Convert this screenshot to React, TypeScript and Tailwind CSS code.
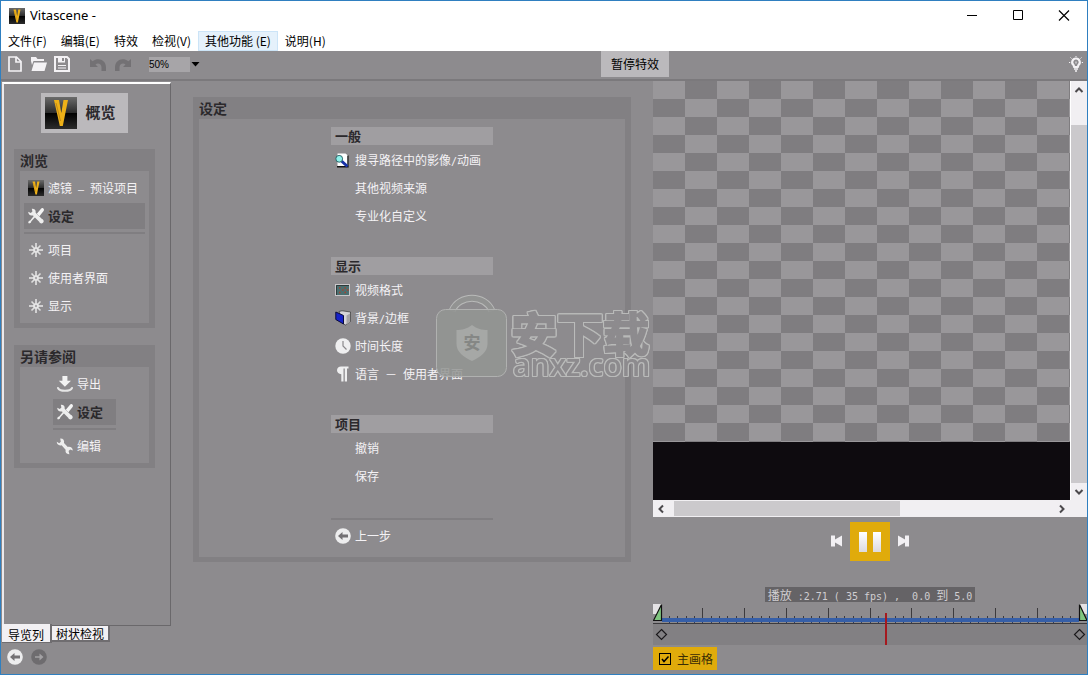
import React from "react";

type IconProps = { className?: string };

function VLogo({ className }: IconProps) {
  return (
    <svg viewBox="0 0 32 32" className={className} aria-hidden="true">
      <defs>
        <linearGradient id="vTop" x1="0" y1="0" x2="0" y2="1">
          <stop offset="0" stopColor="#6b6b6b" />
          <stop offset="1" stopColor="#2a2a2a" />
        </linearGradient>
        <linearGradient id="vBottom" x1="0" y1="0" x2="0" y2="1">
          <stop offset="0" stopColor="#000" />
          <stop offset="1" stopColor="#2c2c2c" />
        </linearGradient>
      </defs>
      <rect width="32" height="16" fill="url(#vTop)" />
      <rect y="16" width="32" height="16" fill="url(#vBottom)" />
      <path d="M9 3h5l2.300 13 2.200-13H23l-5.200 26h-3z" fill="#eeb118" />
      <path d="M11 6l4.500 18" stroke="#c28a14" strokeWidth="1" />
    </svg>
  );
}

function ToolsIcon({ className }: IconProps) {
  return (
    <svg viewBox="1 1 16 16" className={className} aria-hidden="true">
      <path
        d="M1.2 4.8 3.8 6 5.4 4.600 4.800 1.800C7.200 1.400 9.200 3.200 8.600 5.800l6.400 6.200c1.800.6 2.200 2.600 1 3.800-1.200 1.200-3.200.8-3.800-1L6 8.400C3.400 9.200 1.200 7.400 1.200 4.800z"
        fill="#ededed"
      />
      <path d="M16.400 1.400c.8.8.8 1.800 0 2.800l-4 5-2.600-2.400 4.200-5c.8-1 1.800-1 2.400-.4z" fill="#f4f4f4" />
      <path d="M8.800 9.600 4.400 14.200l-.6 1.600-1.800.8-.8-.8.6-1.800 1.400-.6 4-4.800z" fill="#ededed" />
    </svg>
  );
}

function WrenchIcon({ className }: IconProps) {
  return (
    <svg viewBox="0 0 18 18" className={className} aria-hidden="true">
      <path
        d="M.8 4.800 3.200 6.200 4.800 4.800 4.200 1.600C7.200 1.400 8.600 3.400 8 6l3.800 4c2.800-.6 5 1 5 3.600l-2.600-1-1.600 1.400.8 3.200c-2.800.2-4.400-1.800-3.800-4.400L5.600 8.200C3 9 .6 7.400.8 4.800z"
        fill="#ededed"
      />
    </svg>
  );
}

function ExportIcon({ className }: IconProps) {
  return (
    <svg viewBox="0 0 18 18" className={className} aria-hidden="true">
      <path d="M6.400 1h5v4.800H15l-6.100 6-6.100-6h3.600z" fill="#f2f2f2" />
      <path d="M2 13c1 2.200 3 2.800 7 2.800s6-.6 7-2.800" fill="none" stroke="#e6e6e6" strokeWidth="2" strokeLinecap="round" />
    </svg>
  );
}

function StarIcon({ className }: IconProps) {
  return (
    <svg viewBox="0 0 14 14" className={className} aria-hidden="true">
      <path d="M7 0v14M0 7h14" stroke="#e9e9e9" strokeWidth="1.500" />
      <path d="M2.500 2.500l9 9M11.500 2.500l-9 9" stroke="#dedede" strokeWidth="1.600" />
      <circle cx="7" cy="7" r="2.800" fill="#e9e9e9" />
      <circle cx="7" cy="7" r="1.200" fill="#a9a7aa" />
    </svg>
  );
}

function SearchPageIcon({ className }: IconProps) {
  return (
    <svg viewBox="0 0 16 16" className={className} aria-hidden="true">
      <path d="M2.500 1.500h8l3 2.500v10.500h-11z" fill="#fff" />
      <path d="M13 3.500v11.200H2" fill="none" stroke="#111" strokeWidth="1.400" />
      <path d="M6.500 9l6 5.500" stroke="#1832a8" strokeWidth="3" />
      <circle cx="4.200" cy="6.800" r="3.400" fill="#8ff0ea" stroke="#2a6468" strokeWidth="1" />
    </svg>
  );
}

function VideoFormatIcon({ className }: IconProps) {
  return (
    <svg viewBox="0 0 16 16" className={className} aria-hidden="true">
      <rect x="0.500" y="2.500" width="14" height="11" fill="#4b6f70" stroke="#c9c7ca" />
      <path d="M1.500 13V3.500H14" fill="none" stroke="#2e3b3b" />
      <path d="M4 6h1.500M9.500 6H11M7 8h1.500M4 10.500h1.500M9.500 10.500H11M12 8h1.500" stroke="#a8412f" strokeWidth="1.500" />
    </svg>
  );
}

function BackgroundIcon({ className }: IconProps) {
  return (
    <svg viewBox="0 0 16 16" className={className} aria-hidden="true">
      <path d="M4 1.500 7 .8l8.500 1.200v9.500l-5 3.500-2-1z" fill="#d6d4d7" stroke="#222" strokeWidth="0.600" />
      <path d="M11.500 5.500l3.500-2v8.500l-3.500 2.500z" fill="#a5a3a6" />
      <path d="M.8 2 8.500 5.500V14L.8 9.500z" fill="#1622c8" stroke="#0a0a3c" strokeWidth="1" />
    </svg>
  );
}

function ClockIcon({ className }: IconProps) {
  return (
    <svg viewBox="0 0 16 16" className={className} aria-hidden="true">
      <circle cx="8" cy="8" r="7.700" fill="#efeff0" />
      <path d="M8 3v5l3.500 3.500" fill="none" stroke="#8b898c" strokeWidth="1.200" />
    </svg>
  );
}

function PilcrowIcon({ className }: IconProps) {
  return (
    <svg viewBox="0 0 16 16" className={className} aria-hidden="true">
      <path d="M6 .5h7.500v2H12v13H9.800v-13H8.500v13H6.300V8.200C3.800 8.200 2 6.500 2 4.300S3.800.5 6 .5z" fill="#efeff0" />
    </svg>
  );
}

function ArrowDisc({ className, direction, muted }: IconProps & { direction: "left" | "right"; muted?: boolean }) {
  return (
    <svg viewBox="0 0 16 16" className={className} aria-hidden="true">
      <circle cx="8" cy="8" r="7.800" fill={muted ? "#6e6c6f" : "#ededee"} />
      <path
        d={direction === "left" ? "M3 8l4.500-4v2.600H13v2.800H7.500V12z" : "M12.500 8L8.500 4.500v2.800H4v1.400h4.500v2.800z"}
        fill={muted ? "#a3a1a4" : "#737174"}
      />
    </svg>
  );
}

function NewIcon() {
  return (
    <svg viewBox="0 0 14 16" className="h-4 w-3.5" aria-hidden="true">
      <path d="M1 1h7.500L13 5.500V15H1zM8 1v5h5" fill="none" stroke="#f4f2f5" strokeWidth="1.700" />
    </svg>
  );
}

function OpenIcon() {
  return (
    <svg viewBox="0 0 18 16" className="h-4 w-[18px]" aria-hidden="true">
      <path d="M1 1h5l1.500 2H14v2H3.500L2 9 1 5z" fill="#f4f2f5" />
      <path d="M4 6.500h13L14.500 15H1.500z" fill="#f4f2f5" />
    </svg>
  );
}

function SaveIcon() {
  return (
    <svg viewBox="0 0 16 16" className="size-4" aria-hidden="true">
      <path d="M1 1h12l2 2v12H1z" fill="none" stroke="#f4f2f5" strokeWidth="2" />
      <path d="M4 1h7v5.500H4z" fill="#f4f2f5" />
      <path d="M8 2h2v3H8z" fill="#8d8b8e" />
      <path d="M4 9.500h8M4 12h8" stroke="#f4f2f5" strokeWidth="1.200" />
    </svg>
  );
}

function UndoIcon({ className }: IconProps) {
  return (
    <svg viewBox="0 0 17 13" className={className} aria-hidden="true">
      <path d="M0 1l2.500 2.200C8 -1 16 1.500 16 9.500V13h-4.500V9.500c0-3.500-3.500-5-6-3L8 9H0z" fill="#737174" />
    </svg>
  );
}

function BulbIcon() {
  return (
    <svg viewBox="0 0 14 16" className="h-4 w-3.5" aria-hidden="true">
      <path d="M7 2.500a3.700 3.700 0 0 1 2.500 6.500L8.800 11H5.200l-.7-2a3.700 3.700 0 0 1 2.500-6.500z" fill="none" stroke="#f4f2f5" strokeWidth="2.200" />
      <path d="M5 13h4M6 15h2" stroke="#f4f2f5" strokeWidth="1.700" />
      <path d="M7 0v1M1.500 1.500l1 1M12.500 1.500l-1 1M0 6.500h1.200M12.800 6.500H14M7 5.500v2" stroke="#f4f2f5" />
    </svg>
  );
}

function Chevron({ d }: { d: string }) {
  return (
    <svg viewBox="0 0 10 10" className="size-2.5" aria-hidden="true">
      <path d={d} fill="none" stroke="#4c4a4d" strokeWidth="2" />
    </svg>
  );
}

const Half = ({ children }: { children: React.ReactNode }) => (
  <span className="whitespace-pre font-['DejaVu_Sans_Mono',monospace] text-[10px]">{children}</span>
);

function Row({ icon, selected, children }: { icon?: React.ReactNode; selected?: boolean; children: React.ReactNode }) {
  return (
    <button
      type="button"
      className={
        selected
          ? "my-px flex h-[26px] w-full items-center gap-1 bg-[#807e81] pl-1 text-[13px] font-bold whitespace-nowrap text-[#2b292c]"
          : "flex h-7 w-full items-center gap-1 pl-1 text-xs whitespace-nowrap text-[#f4f2f5]"
      }
    >
      <span className="flex w-4 shrink-0 justify-center [&>svg]:shrink-0">{icon}</span>
      <span>{children}</span>
    </button>
  );
}

const Rule = () => <hr className="my-0.5 h-0.5 w-full border-0 bg-[#807e81]" />;

function Panel({ title, children }: { title: string; children: React.ReactNode }) {
  return (
    <section className="bg-[#828083] px-1.5 pb-[5px]">
      <h2 className="h-[22px] text-sm leading-[22px] font-bold text-[#2b292c]">{title}</h2>
      <div className="bg-[#8d8b8e]">{children}</div>
    </section>
  );
}

function Group({ title, children }: { title: string; children: React.ReactNode }) {
  return (
    <section className="mb-[27px] last-of-type:mb-[26px]">
      <h3 className="mb-px h-[18px] bg-[#a09ea1] pl-1 text-[13px] leading-[18px] font-bold text-[#2b292c]">{title}</h3>
      {children}
    </section>
  );
}

const menus = ["文件(F)", "编辑(E)", "特效", "检视(V)", "其他功能 (E)", "说明(H)"];

function Sidebar() {
  return (
    <aside className="flex w-[170px] shrink-0 flex-col">
      <nav className="mt-px ml-px flex flex-1 flex-col border-t-2 border-r border-b border-l-2 border-t-white border-r-[#6a686b] border-b-[#6a686b] border-l-[#eceaed] pr-[15px] pl-2.5">
        <button type="button" className="mt-[9px] flex items-center gap-2 self-center bg-[#bbb9bc] p-1 pr-3 text-[15px] leading-none font-bold text-[#2b292c]">
          <VLogo className="size-8" />
          <span className="pb-1">概览</span>
        </button>
        <div className="mt-4">
          <Panel title="浏览">
            <div className="flex flex-col px-1 py-[3px]">
              <Row icon={<VLogo className="size-4" />}>
                滤镜<Half>{" – "}</Half>预设项目
              </Row>
              <Row selected icon={<ToolsIcon className="size-4" />}>设定</Row>
              <Rule />
              <Row icon={<StarIcon className="size-3.5" />}>项目</Row>
              <Row icon={<StarIcon className="size-3.5" />}>使用者界面</Row>
              <Row icon={<StarIcon className="size-3.5" />}>显示</Row>
            </div>
          </Panel>
        </div>
        <div className="mt-[17px]">
          <Panel title="另请参阅">
            <div className="mx-auto flex w-[63px] flex-col py-[3px]">
              <Row icon={<ExportIcon className="size-[18px]" />}>导出</Row>
              <Row selected icon={<ToolsIcon className="size-4" />}>设定</Row>
              <Rule />
              <Row icon={<WrenchIcon className="size-[18px]" />}>编辑</Row>
            </div>
          </Panel>
        </div>
      </nav>
      <div role="tablist" className="ml-px flex h-[17px] items-start text-xs text-black">
        <button type="button" role="tab" aria-selected="true" className="-mt-0.5 h-[19px] border-r-2 border-b border-[#6f6d70] bg-[#f2f0f3] px-1.5 pt-[3px] leading-[15px]">
          导览列
        </button>
        <button type="button" role="tab" aria-selected="false" className="h-4 border-r-2 border-b-2 border-[#6f6d70] bg-[#f2f0f3] px-1 leading-[15px]">
          树状检视
        </button>
      </div>
      <div className="flex gap-2 pt-1.5 pb-[9px] pl-1.5">
        <button type="button" aria-label="上一页"><ArrowDisc direction="left" className="size-4" /></button>
        <button type="button" aria-label="下一页"><ArrowDisc direction="right" muted className="size-4" /></button>
      </div>
    </aside>
  );
}

function Settings() {
  return (
    <main className="min-w-0 flex-1 px-[22px] pt-4">
      <Panel title="设定">
        <div className="mx-auto flex w-[162px] flex-col pt-2 pb-[7px]">
          <Group title="一般">
            <Row icon={<SearchPageIcon className="size-4" />}>搜寻路径中的影像<Half>/</Half>动画</Row>
            <Row>其他视频来源</Row>
            <Row>专业化自定义</Row>
          </Group>
          <Group title="显示">
            <Row icon={<VideoFormatIcon className="size-4" />}>视频格式</Row>
            <Row icon={<BackgroundIcon className="size-4" />}>背景<Half>/</Half>边框</Row>
            <Row icon={<ClockIcon className="size-4" />}>时间长度</Row>
            <Row icon={<PilcrowIcon className="size-4" />}>语言<Half> </Half>－<Half> </Half>使用者界面</Row>
          </Group>
          <Group title="项目">
            <Row>撤销</Row>
            <Row>保存</Row>
          </Group>
          <Rule />
          <Row icon={<ArrowDisc direction="left" className="size-4" />}>上一步</Row>
        </div>
      </Panel>
    </main>
  );
}

function Timeline() {
  const ticks = Array.from({ length: 49 }, (_, i) => i + 1);
  return (
    <svg viewBox="0 0 434 42" preserveAspectRatio="none" className="mt-px h-[42px] w-full" aria-hidden="true">
      <rect y="21" width="434" height="21" fill="#828083" />
      {ticks.map((i) => {
        const x = Math.floor(8 + i * 8.36);
        const major = i % 5 === 0;
        return <rect key={i} x={x} y={major ? 5 : 13} width="1" height={major ? 10 : 2} fill="#3c3a3d" />;
      })}
      <rect x="9" y="15" width="417" height="4" fill="#365fa8" />
      {ticks.map((i) => (
        <rect key={i} x={Math.floor(8 + i * 8.36)} y="19" width="1" height="1" fill="#2a3c66" />
      ))}
      <rect y="20" width="434" height="1" fill="#3c3a3d" />
      <rect x="0" y="1" width="9" height="10" fill="#e4e2e5" />
      <path d="M8.500 1.500v16H.5z" fill="#7fc67f" stroke="#111" strokeWidth="1.200" />
      <rect x="426" y="1" width="8" height="10" fill="#e4e2e5" />
      <path d="M426.500 1.500v16h7.500z" fill="#7fc67f" stroke="#111" strokeWidth="1.200" />
      <path d="M8.500 26.500l5 5-5 5-5-5z" fill="none" stroke="#1a181b" strokeWidth="1.200" />
      <path d="M426.500 26.500l5 5-5 5-5-5z" fill="none" stroke="#1a181b" strokeWidth="1.200" />
      <rect x="232" y="10" width="2" height="32" fill="#a5191f" />
    </svg>
  );
}

function Preview() {
  return (
    <section className="flex w-[434px] shrink-0 flex-col">
      <div className="flex flex-1">
        <div className="flex flex-1 flex-col">
          <div className="flex-1 bg-[conic-gradient(#7f7d80_25%,#99979a_0_50%,#7f7d80_0_75%,#99979a_0)] bg-[length:64px_36px]" />
          <div className="h-[58px] bg-[#0e0b0f]" />
        </div>
        <div className="flex w-[17px] flex-col items-center border-l border-white bg-[#f1eff2]">
          <button type="button" aria-label="向上滚动" className="flex h-[44px] items-start pt-1"><Chevron d="M1.500 7L5 3.500 8.500 7" /></button>
          <div className="w-full flex-1 bg-[#cbc9cc]" />
          <button type="button" aria-label="向下滚动" className="flex h-[17px] items-center"><Chevron d="M1.500 3L5 6.500 8.500 3" /></button>
        </div>
      </div>
      <div className="flex h-[17px] items-center bg-[#f1eff2] pr-5 pl-[3px]">
        <button type="button" aria-label="向左滚动" className="w-[18px]"><Chevron d="M7 1.500L3.500 5 7 8.500" /></button>
        <div className="h-[15px] flex-1">
          <div className="h-full w-[59%] bg-[#cbc9cc]" />
        </div>
        <button type="button" aria-label="向右滚动"><Chevron d="M3 1.500L6.500 5 3 8.500" /></button>
      </div>
      <div className="mt-[5px] flex items-center justify-center gap-2">
        <button type="button" aria-label="到开头" className="pb-0.5">
          <svg viewBox="0 0 11 12" className="h-3 w-[11px]"><path d="M0 .5h4v4L11 .5v11l-7-4v4H0z" fill="#f2f0f3" /></svg>
        </button>
        <button type="button" aria-label="暂停" className="flex h-[39px] w-10 items-center justify-center gap-1.5 bg-[#e0ab0b]">
          <span className="h-5 w-2 bg-linear-to-b from-white to-[#dcdadd]" />
          <span className="h-5 w-2 bg-linear-to-b from-white to-[#dcdadd]" />
        </button>
        <button type="button" aria-label="到结尾" className="pb-0.5">
          <svg viewBox="0 0 11 12" className="h-3 w-[11px]"><path d="M11 .5H7v4L0 .5v11l7-4v4h4z" fill="#f2f0f3" /></svg>
        </button>
      </div>
      <p className="mt-[26px] h-[15px] self-center bg-[#656366] px-[3px] text-xs leading-[15px] whitespace-nowrap text-[#d0ced1]">
        播放<Half>{" :2.71 ( 35 fps) ,  0.0 "}</Half>到<Half>{" 5.0"}</Half>
      </p>
      <Timeline />
      <label className="mt-0.5 mb-1 flex h-[23px] items-center gap-1.5 self-start bg-[#e0ab0b] px-1.5 pr-1 text-xs text-[#3a2c05]">
        <span className="grid">
          <input type="checkbox" defaultChecked className="peer col-start-1 row-start-1 size-3 appearance-none border border-black" />
          <svg viewBox="0 0 12 12" className="pointer-events-none invisible col-start-1 row-start-1 size-3 peer-checked:visible">
            <path d="M3 6l2 2.500L9.500 3.500" fill="none" stroke="#000" strokeWidth="1.500" />
          </svg>
        </span>
        主画格
      </label>
    </section>
  );
}

function Watermark() {
  return (
    <div className="pointer-events-none absolute top-[293px] left-[434px] flex" aria-hidden="true">
      <svg viewBox="0 0 74 86" className="h-[86px] w-[74px] shrink-0">
        <path d="M17 17C24 0 50 0 57 17" fill="none" stroke="#b9bab9" strokeWidth="7" />
        <path d="M17 17C24 0 50 0 57 17" fill="none" stroke="#929392" strokeWidth="5" />
        <rect x="1.500" y="15.500" width="70" height="67" rx="9" fill="#939593" fillOpacity="0.850" stroke="#b0b1b0" />
        <path d="M37 31c5 4 10 5 15.500 5v14c0 8-7 13-15.500 17-8.500-4-15.500-9-15.500-17V36c5.500 0 10.500-1 15.500-5z" fill="#a6a8a6" />
        <text x="37" y="55" textAnchor="middle" fontSize="17" fill="#858785" className="font-['Noto_Sans_CJK_SC',sans-serif] font-bold">安</text>
      </svg>
      <div className="flex flex-col pt-4 pl-0.5 text-[#8d8b8e] [filter:drop-shadow(1px_0_#b9bab9)_drop-shadow(-1px_0_#b9bab9)_drop-shadow(0_1px_#b9bab9)_drop-shadow(0_-1px_#b9bab9)]">
        <span className="h-[43px] text-[46px] leading-[43px] font-bold whitespace-nowrap [-webkit-text-stroke:2px_#8d8b8e]">安下载</span>
        <span className="h-6 pl-0.5 font-['Open_Sans',sans-serif] text-[30px] leading-6 font-semibold whitespace-nowrap">anxz.com</span>
      </div>
    </div>
  );
}

export default function App() {
  return (
    <div className="relative flex min-h-screen flex-col border border-[#2f7fc0] bg-[#8d8b8e] font-['Noto_Sans_CJK_SC',sans-serif]">
      <header className="bg-white text-black">
        <div className="flex h-[30px] items-center pl-2">
          <VLogo className="size-4" />
          <h1 className="ml-[5px] flex-1 font-['Noto_Sans',sans-serif] text-[13px]">Vitascene -</h1>
          <button type="button" aria-label="最小化" className="flex h-full w-[46px] items-center justify-center">
            <svg viewBox="0 0 12 12" className="size-3"><path d="M1 5.500h10" stroke="#000" /></svg>
          </button>
          <button type="button" aria-label="最大化" className="flex h-full w-[46px] items-center justify-center">
            <svg viewBox="0 0 12 12" className="size-3"><path d="M1.500 .5h9v9h-9z" fill="none" stroke="#000" /></svg>
          </button>
          <button type="button" aria-label="关闭" className="flex h-full w-[46px] items-center justify-center">
            <svg viewBox="0 0 12 12" className="size-3"><path d="M1 .5l10 10M11 .5L1 10.500" stroke="#000" strokeWidth="1.200" /></svg>
          </button>
        </div>
        <nav className="flex h-5 text-xs">
          {menus.map((m) => (
            <button
              key={m}
              type="button"
              className={
                m.startsWith("其他")
                  ? "border border-[#cce4f7] bg-[#e5f1fb] px-1.5 leading-[18px] whitespace-pre"
                  : "px-[7px] leading-5"
              }
            >
              {m}
            </button>
          ))}
        </nav>
      </header>
      <div className="flex h-[30px] items-start border-b-2 border-b-[#7b797c] pl-[7px] text-xs">
        <div className="flex h-[26px] w-[593px] items-center">
          <button type="button" aria-label="新建"><NewIcon /></button>
          <button type="button" aria-label="打开" className="ml-2"><OpenIcon /></button>
          <button type="button" aria-label="保存" className="ml-1.5"><SaveIcon /></button>
          <button type="button" aria-label="撤销" className="ml-5"><UndoIcon className="h-[13px] w-[17px]" /></button>
          <button type="button" aria-label="重做" className="ml-[7px]"><UndoIcon className="h-[13px] w-[17px] -scale-x-100" /></button>
          <label className="ml-[18px] flex items-center">
            <select aria-label="缩放" defaultValue="50%" className="h-[15px] w-[41px] appearance-none bg-[#a7a5a8] font-['Liberation_Sans',sans-serif] text-[10px] leading-[15px] text-black">
              <option>50%</option>
              <option>100%</option>
            </select>
            <svg viewBox="0 0 9 5" className="ml-px h-[5px] w-[9px]" aria-hidden="true"><path d="M.5 0h8L4.500 4.500z" fill="#000" /></svg>
          </label>
        </div>
        <button type="button" className="h-[26px] bg-[#bbb9bc] px-2.5 text-black">暂停特效</button>
        <button type="button" aria-label="提示" className="mt-[5px] mr-1 ml-auto"><BulbIcon /></button>
      </div>
      <div className="flex flex-1">
        <Sidebar />
        <Settings />
        <Preview />
      </div>
      <Watermark />
    </div>
  );
}
